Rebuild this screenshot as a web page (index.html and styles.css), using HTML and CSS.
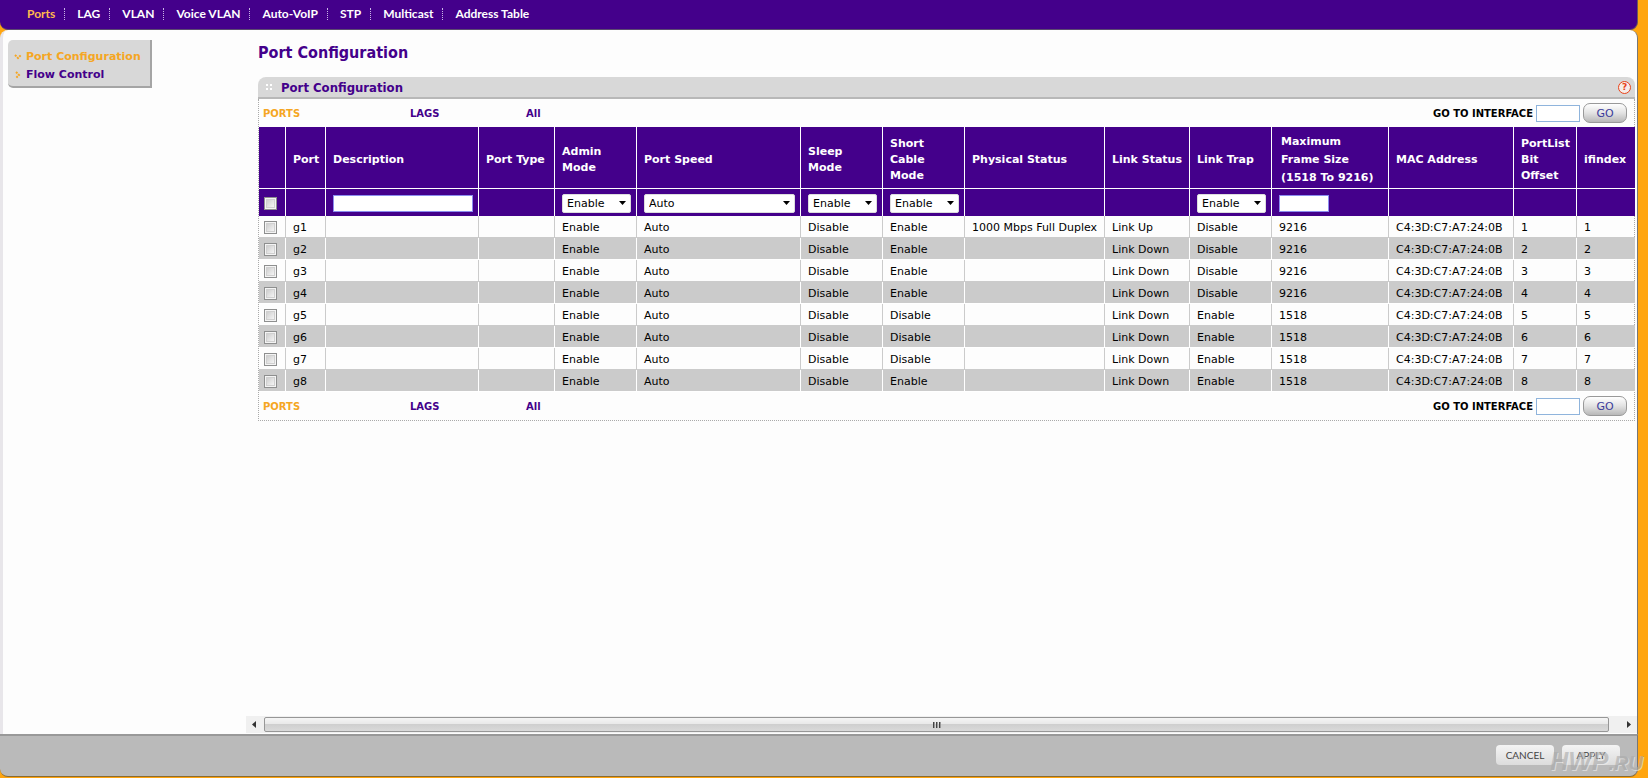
FILE: index.html
```
<!DOCTYPE html>
<html lang="en">
<head>
  <meta charset="UTF-8">
  <meta name="viewport" content="width=device-width, initial-scale=1.0">
  <title>Port Configuration</title>
  <link rel="stylesheet" href="styles.css">
</head>
<body>
  <div class="frame">
    <nav class="topnav">
      <a href="#" class="active">Ports</a>
      <a href="#">LAG</a>
      <a href="#">VLAN</a>
      <a href="#">Voice VLAN</a>
      <a href="#">Auto-VoIP</a>
      <a href="#">STP</a>
      <a href="#">Multicast</a>
      <a href="#">Address Table</a>
    </nav>

    <div class="body">
      <aside class="sidebar">
        <div class="sidemenu">
          <a href="#" class="active"><svg width="8" height="8" viewBox="0 0 8 8"><path d="M1 2l3 3 3-3" /></svg>Port Configuration</a>
          <a href="#"><svg width="8" height="8" viewBox="0 0 8 8"><path d="M2 1l3 3-3 3" /></svg>Flow Control</a>
        </div>
      </aside>

      <main class="content">
        <div class="scroll-area">
          <h1>Port Configuration</h1>
          <section class="panel">
            <div class="panel-head">
              <span class="grip"><i></i><i></i><i></i><i></i></span>
              <h2>Port Configuration</h2>
              <button type="button" class="help" aria-label="Help">?</button>
            </div>

            <div class="panel-body">
              <div class="toolbar">
                <a href="#" class="active">PORTS</a>
                <a href="#">LAGS</a>
                <a href="#">All</a>
                <label for="goTop">GO TO INTERFACE</label>
                <input type="text" id="goTop">
                <button type="button" class="go">GO</button>
              </div>

              <table>
                <colgroup>
                  <col class="c-check"><col class="c-port"><col class="c-desc"><col class="c-type"><col class="c-mode">
                  <col class="c-speed"><col class="c-mode"><col class="c-mode"><col class="c-phys"><col class="c-link">
                  <col class="c-mode"><col class="c-frame"><col class="c-mac"><col class="c-offset"><col class="c-index">
                </colgroup>
                <thead>
                  <tr class="titles">
                    <th></th>
                    <th>Port</th>
                    <th>Description</th>
                    <th>Port Type</th>
                    <th>Admin<br>Mode</th>
                    <th>Port Speed</th>
                    <th>Sleep<br>Mode</th>
                    <th>Short<br>Cable<br>Mode</th>
                    <th>Physical Status</th>
                    <th>Link Status</th>
                    <th>Link Trap</th>
                    <th class="tall">Maximum<br>Frame Size<br>(1518 To 9216)</th>
                    <th>MAC Address</th>
                    <th>PortList<br>Bit<br>Offset</th>
                    <th>ifindex</th>
                  </tr>
                  <tr class="filters">
                    <td><input type="checkbox" aria-label="Select all"></td>
                    <td></td>
                    <td><input type="text" class="desc" aria-label="Description"></td>
                    <td></td>
                    <td><select aria-label="Admin Mode"><option>Enable</option><option>Disable</option></select></td>
                    <td><select aria-label="Port Speed"><option>Auto</option></select></td>
                    <td><select aria-label="Sleep Mode"><option>Enable</option><option>Disable</option></select></td>
                    <td><select aria-label="Short Cable Mode"><option>Enable</option><option>Disable</option></select></td>
                    <td></td>
                    <td></td>
                    <td><select aria-label="Link Trap"><option>Enable</option><option>Disable</option></select></td>
                    <td><input type="text" class="size" aria-label="Maximum Frame Size"></td>
                    <td></td>
                    <td></td>
                    <td></td>
                  </tr>
                </thead>
                <tbody id="ports"></tbody>
              </table>

              <div class="toolbar">
                <a href="#" class="active">PORTS</a>
                <a href="#">LAGS</a>
                <a href="#">All</a>
                <label for="goBottom">GO TO INTERFACE</label>
                <input type="text" id="goBottom">
                <button type="button" class="go">GO</button>
              </div>
            </div>
          </section>
        </div>

        <div class="hscroll">
          <svg width="18" height="16" viewBox="0 0 18 16"><path d="M10 4v7L6 7.500z" /></svg>
          <div class="thumb"><i></i><i></i><i></i></div>
          <svg width="28" height="16" viewBox="0 0 28 16"><path d="M18 4v7l4-3.500z" /></svg>
        </div>
      </main>
    </div>

    <footer class="actions">
      <button type="button">CANCEL</button>
      <button type="button">APPLY</button>
    </footer>
  </div>
  <div class="watermark">HWP<small>.RU</small></div>

  <script>
    // port, short cable, physical status, link, trap, frame size
    const ports = [
      ['g1', 'Enable', '1000 Mbps Full Duplex', 'Link Up', 'Disable', 9216],
      ['g2', 'Enable', '', 'Link Down', 'Disable', 9216],
      ['g3', 'Enable', '', 'Link Down', 'Disable', 9216],
      ['g4', 'Enable', '', 'Link Down', 'Disable', 9216],
      ['g5', 'Disable', '', 'Link Down', 'Enable', 1518],
      ['g6', 'Disable', '', 'Link Down', 'Enable', 1518],
      ['g7', 'Disable', '', 'Link Down', 'Enable', 1518],
      ['g8', 'Enable', '', 'Link Down', 'Enable', 1518]
    ];

    const tbody = document.getElementById('ports');
    ports.forEach(([port, cable, phys, link, trap, size], i) => {
      const cells = [port, '', '', 'Enable', 'Auto', 'Disable', cable, phys, link, trap, size, 'C4:3D:C7:A7:24:0B', i + 1, i + 1];
      const row = document.createElement('tr');
      row.innerHTML = `<td><input type="checkbox" aria-label="Select ${port}"></td>` +
        cells.map(c => `<td>${c}</td>`).join('');
      tbody.appendChild(row);
    });
  </script>
</body>
</html>
```
FILE: styles.css
```
:root {
  --purple: #44008b;
  --orange: #f5a623;
  --edge: #ffa50f;
  --grey: #d8d8d8;
  --row: #cbcbcb;
}

* {
  box-sizing: border-box;
}

body {
  margin: 0;
  background: var(--edge);
  color: #000;
  font-family: Verdana, "DejaVu Sans", sans-serif;
  font-size: 11px;
}

a {
  color: var(--purple);
  text-decoration: none;
}

.frame {
  display: flex;
  flex-direction: column;
  min-height: 100vh;
  margin-right: 10px;
  padding-bottom: 1px;
}

/* top navigation */
.topnav {
  display: flex;
  align-items: center;
  height: 30px;
  padding: 0 15px 2px;
  background: var(--purple);
  border-right: 1px solid #6b5a5a;
  border-bottom: 1px solid #5c4a70;
  border-radius: 0 0 8px 8px;
  font-family: "Futura Std", Lato, sans-serif;
  font-size: 12px;
  font-weight: bold;
}

.topnav a {
  padding: 0 9px 0 12px;
  color: #fff;
  line-height: 12px;
  border-right: 1px dotted #c9b5e6;
}

.topnav a:last-child {
  border-right: none;
}

.topnav .active {
  color: #ffb84d;
}

.body {
  flex: 1;
  display: flex;
  background: #fdfdfd;
  border-left: 3px solid #e8e6ea;
  border-right: 1px solid #777;
  border-radius: 8px 8px 0 0;
}

/* left menu */
.sidebar {
  width: 243px;
  padding: 10px 0 0 5px;
}

.sidemenu {
  display: flex;
  flex-direction: column;
  width: 144px;
  padding: 8px 0 2px 6px;
  background: var(--grey);
  border-right: 2px solid #a5a5a5;
  border-bottom: 2px solid #a5a5a5;
  border-radius: 5px 0 0 5px;
}

.sidemenu a {
  display: flex;
  align-items: center;
  gap: 4px;
  font-weight: bold;
  line-height: 18px;
  white-space: nowrap;
}

.sidemenu svg {
  fill: none;
  stroke: var(--orange);
  stroke-width: 2;
  stroke-dasharray: 2 1;
}

.active,
.sidemenu .active {
  color: var(--orange);
}

/* main column */
.content {
  flex: 1;
  display: flex;
  flex-direction: column;
  min-width: 0;
}

.scroll-area {
  flex: 1;
  padding: 13px 2px 0 12px;
}

h1,
h2 {
  margin: 0;
  color: var(--purple);
  font-family: Tahoma, "DejaVu Sans Condensed", "Noto Sans", sans-serif;
}

h1 {
  margin-bottom: 14px;
  font-size: 16px;
  line-height: 20px;
}

h2 {
  flex: 1;
  font-size: 13px;
}

.panel-head {
  display: flex;
  align-items: center;
  height: 22px;
  padding: 0 4px 0 8px;
  background: var(--grey);
  border-bottom: 2px solid #b8b8b8;
  border-radius: 8px 8px 0 0;
}

.grip {
  display: grid;
  grid-template-columns: 2px 2px;
  gap: 2px;
  margin-right: 9px;
}

.grip i {
  height: 2px;
  background: #fff;
}

.help {
  width: 13px;
  height: 13px;
  padding: 0;
  background: #f6ece8;
  border: 1px solid #e8431a;
  border-radius: 50%;
  color: #e8431a;
  font: bold 9px/11px "DejaVu Sans", sans-serif;
}

.panel-body {
  border: 1px dotted #aaa;
  border-top: none;
}

/* bars over and under the table */
.toolbar {
  display: flex;
  align-items: center;
  height: 28px;
  padding: 0 7px 0 4px;
  font-size: 10px;
  font-weight: bold;
}

.toolbar a {
  width: 147px;
}

.toolbar a:nth-child(2) {
  width: 116px;
}

.toolbar label {
  margin-left: auto;
}

.toolbar input {
  width: 44px;
  height: 17px;
  margin: 0 3px;
  background: #fff;
  border: 1px solid #8fb4dc;
}

.go {
  width: 44px;
  height: 20px;
  padding: 0;
  background: linear-gradient(#fff, #e2e2e2 50%, #b8b8b8);
  border: 1px solid #999;
  border-radius: 7px;
  color: #3c3c9c;
  font: 11px "DejaVu Sans", sans-serif;
}

/* port table */
table {
  width: 100%;
  table-layout: fixed;
  border-collapse: separate;
  border-spacing: 0;
}

.c-check { width: 27px; }
.c-port { width: 40px; }
.c-desc { width: 153px; }
.c-type { width: 76px; }
.c-mode { width: 82px; }
.c-speed { width: 164px; }
.c-phys { width: 140px; }
.c-link { width: 85px; }
.c-frame { width: 117px; }
.c-mac { width: 125px; }
.c-offset { width: 63px; }
.c-index { width: 58px; }

th,
td {
  height: 22px;
  padding: 2px 0 0 7px;
  border-right: 1px solid var(--row);
  border-bottom: 1px solid var(--row);
  text-align: left;
  white-space: nowrap;
}

tr > :first-child {
  padding-left: 5px;
}

tr > :last-child {
  border-right: none;
}

tbody tr:nth-child(even) td {
  background: var(--row);
  border-color: #fff;
}

thead th,
thead td {
  background: var(--purple);
  border-color: #fff;
  color: #fff;
}

.titles th {
  height: 62px;
  padding-top: 4px;
  line-height: 16px;
}

.titles .tall {
  padding-left: 9px;
  line-height: 18px;
}

.filters td {
  height: 27px;
  padding-top: 1px;
  padding-right: 5px;
  border-bottom: none;
}

.filters input[type="text"] {
  display: block;
  height: 17px;
  padding: 0 2px;
  background: #fff;
  border: 1px solid #8c8cf0;
}

.filters .desc {
  width: 100%;
}

.filters .size {
  width: 50px;
}

select {
  display: block;
  width: 100%;
  height: 19px;
  padding: 0 4px;
  appearance: none;
  background: #fff url("data:image/svg+xml,%3Csvg xmlns='http://www.w3.org/2000/svg' width='7' height='4'%3E%3Cpath d='M0 0h7L3.500 4z'/%3E%3C/svg%3E") no-repeat right 4px center;
  border: 1px solid #ddd;
  border-radius: 2px;
  color: #000;
  font: 11px Verdana, "DejaVu Sans", sans-serif;
}

input[type="checkbox"] {
  display: block;
  width: 13px;
  height: 13px;
  margin: 0;
  appearance: none;
  background: linear-gradient(135deg, #c4c4c4, #fff);
  border: 1px solid #8e8f8f;
  box-shadow: inset 0 0 0 1px #f4f4f4, inset 0 0 0 2px #d0d0d0;
}

/* horizontal scrollbar */
.hscroll {
  display: flex;
  align-items: center;
  height: 17px;
  margin-bottom: 1px;
  background: #f0f0f0;
}

.hscroll svg {
  flex: none;
  fill: #333;
}

.thumb {
  flex: 1;
  display: flex;
  align-items: center;
  justify-content: center;
  gap: 1px;
  height: 15px;
  background: linear-gradient(#f5f5f5, #e8e8e8 50%, #cfcfcf 50%, #dadada);
  border: 1px solid #979797;
  border-radius: 2px;
}

.thumb i {
  width: 2px;
  height: 6px;
  background: linear-gradient(90deg, #444 50%, #999 50%);
}

/* footer */
.actions {
  display: flex;
  justify-content: flex-end;
  gap: 8px;
  height: 43px;
  padding: 9px 17px 0 0;
  background: #bababa;
  border-top: 2px solid #999;
  border-right: 1px solid #777;
  border-bottom: 1px solid #8a6a30;
  border-radius: 0 0 8px 8px;
}

.actions button {
  width: 58px;
  height: 20px;
  padding: 0;
  background: linear-gradient(#f4f4f4, #dcdcdc);
  border: none;
  border-radius: 4px;
  color: #444;
  font: 10px Lato, sans-serif;
}

.watermark {
  position: absolute;
  right: 5px;
  bottom: 1px;
  color: #aaa;
  font: italic bold 25px/28px "Liberation Sans", sans-serif;
  opacity: 0.6;
  text-shadow: 1px 1px 0 #eee;
  pointer-events: none;
}

.watermark small {
  font-size: 20px;
}
```
